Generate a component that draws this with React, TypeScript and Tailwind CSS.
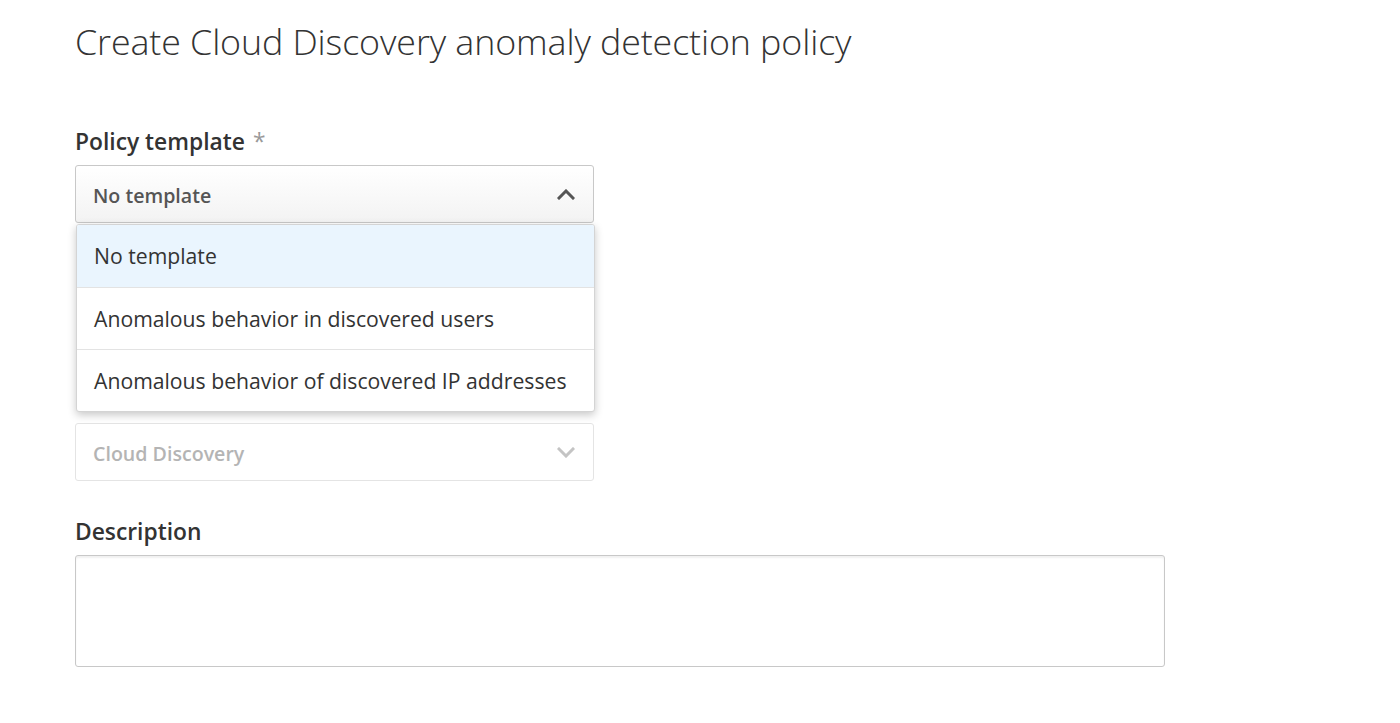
import React from 'react';

const font = { fontFamily: '"Open Sans", "Noto Sans", sans-serif' };

const Chevron = ({ up, className }: { up?: boolean; className?: string }) => (
  <svg width="18" height="11" viewBox="0 0 18 11" className={className}>
    <polyline
      points={up ? '2,9 9,2 16,9' : '2,2 9,9 16,2'}
      fill="none"
      stroke="currentColor"
      strokeWidth="3"
      strokeLinecap="square"
    />
  </svg>
);

const Label = ({ children, required }: { children: React.ReactNode; required?: boolean }) => (
  <div className="mb-[8px] text-[22.8px] leading-[30px] font-semibold text-[#333]">
    {children}
    {required && <span className="ml-[8px] font-normal text-[#999]">*</span>}
  </div>
);

const templates = [
  'No template',
  'Anomalous behavior in discovered users',
  'Anomalous behavior of discovered IP addresses',
];

export default function App() {
  return (
    <div className="min-h-screen w-full bg-white pl-[75px] pt-[16px]" style={font}>
      <h1 className="text-[35.8px] leading-[50px] font-light tracking-[-0.1px] text-[#333]">
        Create Cloud Discovery anomaly detection policy
      </h1>

      <div className="mt-[61px] w-[519px]">
        {/* Policy template */}
        <div className="relative">
          <Label required>Policy template</Label>
          <button className="flex h-[58px] w-full items-center justify-between rounded-[3px] border border-[#c8c8c8] bg-gradient-to-b from-white to-[#f3f3f3] pl-[17px] pr-[18px] text-[19.6px] font-semibold text-[#555]">
            <span className="pt-[3px]">No template</span>
            <Chevron up className="text-[#555]" />
          </button>

          <ul className="absolute left-[1px] top-[97px] z-10 w-[519px] overflow-hidden rounded-[3px] border border-[#d4d4d4] bg-white shadow-[0_3px_8px_rgba(0,0,0,0.22)]">
            {templates.map((t, i) => (
              <li
                key={t}
                className={
                  'flex h-[62px] items-center pl-[17px] text-[21.2px] text-[#333] ' +
                  (i === 0 ? 'bg-[#eaf5fe]' : 'border-t border-[#e3e3e3]')
                }
              >
                {t}
              </li>
            ))}
          </ul>
        </div>

        {/* Category (its label is covered by the open menu) */}
        <div className="mb-[36px] mt-[200px] flex h-[58px] w-full items-center justify-between rounded-[3px] border border-[#e4e4e4] bg-white pl-[17px] pr-[18px] text-[19.6px] font-semibold text-[#b4b4b4]">
          <span className="pt-[3px]">Cloud Discovery</span>
          <Chevron className="text-[#c4c4c4]" />
        </div>
      </div>

      {/* Description */}
      <div className="w-[1090px]">
        <Label>Description</Label>
        <textarea className="block h-[112px] w-full resize-none rounded-[3px] border border-[#c8c8c8] bg-white shadow-[inset_0_2px_2px_rgba(0,0,0,0.06)] outline-none" />
      </div>
    </div>
  );
}
